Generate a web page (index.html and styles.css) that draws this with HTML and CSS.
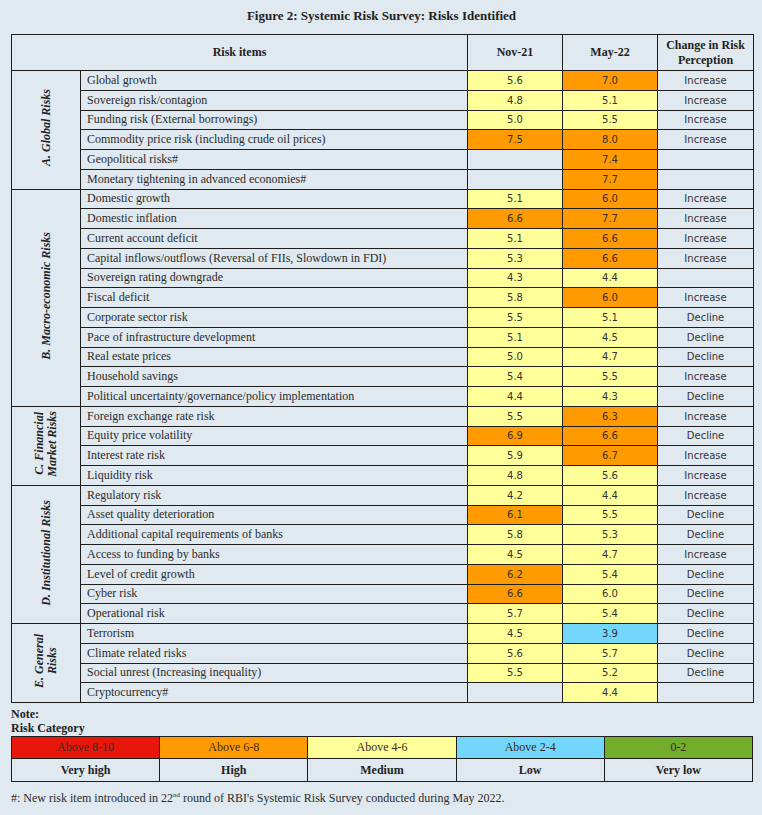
FILE: index.html
```html
<!DOCTYPE html>
<html>
<head>
<meta charset="utf-8">
<link rel="stylesheet" href="styles.css">
</head>
<body>
<div class="page">
  <h1 class="title">Figure 2: Systemic Risk Survey: Risks Identified</h1>
  <table class="risk">
    <colgroup>
      <col class="c-cat"><col class="c-item"><col class="c-val"><col class="c-val"><col class="c-chg">
    </colgroup>
    <thead>
      <tr class="head">
        <th colspan="2">Risk items</th>
        <th>Nov-21</th>
        <th>May-22</th>
        <th>Change in Risk Perception</th>
      </tr>
    </thead>
    <tbody>
      <tr><td class="cat" rowspan="6"><span>A. Global Risks</span></td><td class="item">Global growth</td><td class="v y">5.6</td><td class="v o">7.0</td><td class="chg">Increase</td></tr>
      <tr><td class="item">Sovereign risk/contagion</td><td class="v y">4.8</td><td class="v y">5.1</td><td class="chg">Increase</td></tr>
      <tr><td class="item">Funding risk (External borrowings)</td><td class="v y">5.0</td><td class="v y">5.5</td><td class="chg">Increase</td></tr>
      <tr><td class="item">Commodity price risk (including crude oil prices)</td><td class="v o">7.5</td><td class="v o">8.0</td><td class="chg">Increase</td></tr>
      <tr><td class="item">Geopolitical risks#</td><td class="v"></td><td class="v o">7.4</td><td class="chg"></td></tr>
      <tr><td class="item">Monetary tightening in advanced economies#</td><td class="v"></td><td class="v o">7.7</td><td class="chg"></td></tr>

      <tr><td class="cat" rowspan="11"><span>B. Macro-economic Risks</span></td><td class="item">Domestic growth</td><td class="v y">5.1</td><td class="v o">6.0</td><td class="chg">Increase</td></tr>
      <tr><td class="item">Domestic inflation</td><td class="v o">6.6</td><td class="v o">7.7</td><td class="chg">Increase</td></tr>
      <tr><td class="item">Current account deficit</td><td class="v y">5.1</td><td class="v o">6.6</td><td class="chg">Increase</td></tr>
      <tr><td class="item">Capital inflows/outflows (Reversal of FIIs, Slowdown in FDI)</td><td class="v y">5.3</td><td class="v o">6.6</td><td class="chg">Increase</td></tr>
      <tr><td class="item">Sovereign rating downgrade</td><td class="v y">4.3</td><td class="v y">4.4</td><td class="chg"></td></tr>
      <tr><td class="item">Fiscal deficit</td><td class="v y">5.8</td><td class="v o">6.0</td><td class="chg">Increase</td></tr>
      <tr><td class="item">Corporate sector risk</td><td class="v y">5.5</td><td class="v y">5.1</td><td class="chg">Decline</td></tr>
      <tr><td class="item">Pace of infrastructure development</td><td class="v y">5.1</td><td class="v y">4.5</td><td class="chg">Decline</td></tr>
      <tr><td class="item">Real estate prices</td><td class="v y">5.0</td><td class="v y">4.7</td><td class="chg">Decline</td></tr>
      <tr><td class="item">Household savings</td><td class="v y">5.4</td><td class="v y">5.5</td><td class="chg">Increase</td></tr>
      <tr><td class="item">Political uncertainty/governance/policy implementation</td><td class="v y">4.4</td><td class="v y">4.3</td><td class="chg">Decline</td></tr>

      <tr><td class="cat" rowspan="4"><span>C. Financial<br>Market Risks</span></td><td class="item">Foreign exchange rate risk</td><td class="v y">5.5</td><td class="v o">6.3</td><td class="chg">Increase</td></tr>
      <tr><td class="item">Equity price volatility</td><td class="v o">6.9</td><td class="v o">6.6</td><td class="chg">Decline</td></tr>
      <tr><td class="item">Interest rate risk</td><td class="v y">5.9</td><td class="v o">6.7</td><td class="chg">Increase</td></tr>
      <tr><td class="item">Liquidity risk</td><td class="v y">4.8</td><td class="v y">5.6</td><td class="chg">Increase</td></tr>

      <tr><td class="cat" rowspan="7"><span>D. Institutional Risks</span></td><td class="item">Regulatory risk</td><td class="v y">4.2</td><td class="v y">4.4</td><td class="chg">Increase</td></tr>
      <tr><td class="item">Asset quality deterioration</td><td class="v o">6.1</td><td class="v y">5.5</td><td class="chg">Decline</td></tr>
      <tr><td class="item">Additional capital requirements of banks</td><td class="v y">5.8</td><td class="v y">5.3</td><td class="chg">Decline</td></tr>
      <tr><td class="item">Access to funding by banks</td><td class="v y">4.5</td><td class="v y">4.7</td><td class="chg">Increase</td></tr>
      <tr><td class="item">Level of credit growth</td><td class="v o">6.2</td><td class="v y">5.4</td><td class="chg">Decline</td></tr>
      <tr><td class="item">Cyber risk</td><td class="v o">6.6</td><td class="v y">6.0</td><td class="chg">Decline</td></tr>
      <tr><td class="item">Operational risk</td><td class="v y">5.7</td><td class="v y">5.4</td><td class="chg">Decline</td></tr>

      <tr><td class="cat" rowspan="4"><span>E. General<br>Risks</span></td><td class="item">Terrorism</td><td class="v y">4.5</td><td class="v b">3.9</td><td class="chg">Decline</td></tr>
      <tr><td class="item">Climate related risks</td><td class="v y">5.6</td><td class="v y">5.7</td><td class="chg">Decline</td></tr>
      <tr><td class="item">Social unrest (Increasing inequality)</td><td class="v y">5.5</td><td class="v y">5.2</td><td class="chg">Decline</td></tr>
      <tr><td class="item">Cryptocurrency#</td><td class="v"></td><td class="v y">4.4</td><td class="chg"></td></tr>
    </tbody>
  </table>

  <div class="note">
    <div class="note-line">Note:</div>
    <div class="note-line">Risk Category</div>
  </div>
  <table class="legend">
    <tr class="swatches">
      <td class="r">Above 8-10</td>
      <td class="o">Above 6-8</td>
      <td class="y">Above 4-6</td>
      <td class="b">Above 2-4</td>
      <td class="g">0-2</td>
    </tr>
    <tr class="labels">
      <td>Very high</td>
      <td>High</td>
      <td>Medium</td>
      <td>Low</td>
      <td>Very low</td>
    </tr>
  </table>
  <p class="foot">#: New risk item introduced in 22<sup>nd</sup> round of RBI's Systemic Risk Survey conducted during May 2022.</p>
</div>
</body>
</html>
```

FILE: styles.css
```css
html, body {
  margin: 0;
  padding: 0;
  background: #e0e9ef;
}
body {
  font-family: "Liberation Serif", "DejaVu Serif", serif;
  color: #2b2b2b;
  width: 762px;
  height: 815px;
  overflow: hidden;
}
.page {
  padding: 0 10px 0 11px;
}
.title {
  margin: 0;
  height: 34px;
  line-height: 32px;
  font-size: 13px;
  font-weight: bold;
  text-align: center;
  color: #222;
}
.risk {
  border-collapse: collapse;
  table-layout: fixed;
  width: 742px;
}
.c-cat { width: 69px; }
.c-item { width: 387px; }
.c-val { width: 95px; }
.c-chg { width: 96px; }
.risk td, .risk th {
  border: 1px solid #1e1e1e;
  padding: 0;
}
.head th {
  height: 35px;
  font-size: 12px;
  font-weight: bold;
  line-height: 15px;
  color: #222;
  text-align: center;
}
.risk tbody tr {
  height: 19.75px;
}
.item {
  font-size: 12px;
  padding-left: 6px !important;
  white-space: nowrap;
  line-height: 17px;
}
.v, .chg {
  text-align: center;
  font-family: "DejaVu Sans", Verdana, sans-serif;
  font-size: 10px;
  line-height: 17px;
  color: #333;
}
.y { background: #ffff99; }
.o { background: #ff9a00; }
.b { background: #73d6fb; }
.r { background: #e8170b; }
.g { background: #72ad2b; }
.cat {
  text-align: center;
  vertical-align: middle;
}
.cat span {
  display: inline-block;
  writing-mode: vertical-rl;
  transform: rotate(180deg);
  font-weight: bold;
  font-style: italic;
  font-size: 12px;
  line-height: 13px;
  color: #222;
}
.note {
  padding-top: 4px;
  font-size: 12px;
  font-weight: bold;
  line-height: 14px;
  color: #222;
}
.legend {
  border-collapse: collapse;
  table-layout: fixed;
  width: 742px;
  margin-top: 1px;
}
.legend td {
  border: 1px solid #1e1e1e;
  text-align: center;
  font-size: 12px;
  padding: 0;
}
.swatches td {
  height: 21px;
  color: #3a2a20;
}
.labels td {
  height: 22px;
  font-weight: bold;
  color: #222;
}
.foot {
  margin: 9px 0 0;
  font-size: 12px;
  color: #2b2b2b;
}
.foot sup {
  font-size: 7px;
  line-height: 0;
}
```
